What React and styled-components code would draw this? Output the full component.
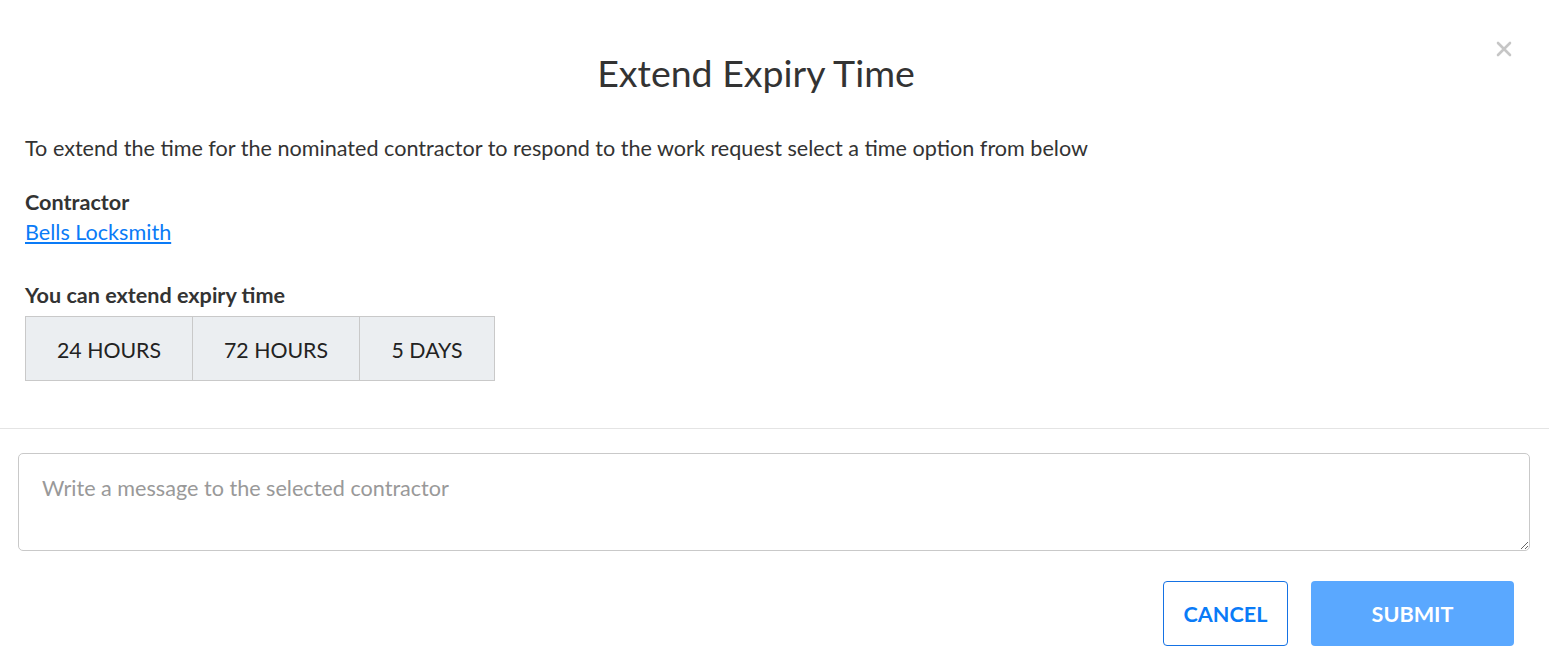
import styled, { createGlobalStyle } from "styled-components";

const GlobalStyle = createGlobalStyle`
  html, body {
    margin: 0;
    padding: 0;
    background: #fff;
  }
  body {
    font-family: Lato, "Liberation Sans", sans-serif;
    color: #333;
  }
  * {
    box-sizing: border-box;
  }
`;

const options = ["24 HOURS", "72 HOURS", "5 DAYS"];

const App = () => {
    return (
        <>
            <GlobalStyle />
            <Modal>
                <CloseButton aria-label="close">
                    <svg width="16" height="16" viewBox="0 0 16 16">
                        <path d="M2 2 L14 14 M14 2 L2 14" stroke="#c6c6c6" strokeWidth="2.6" strokeLinecap="round" />
                    </svg>
                </CloseButton>
                <Title>Extend Expiry Time</Title>
                <Body>
                    <Intro>To extend the time for the nominated contractor to respond to the work request select a time option from below</Intro>
                    <Label>Contractor</Label>
                    <ContractorLink href="#">Bells Locksmith</ContractorLink>
                    <Label spaced>You can extend expiry time</Label>
                    <OptionGroup>
                        {options.map((o, i) => (
                            <OptionButton key={o} wide={i < 2}>{o}</OptionButton>
                        ))}
                    </OptionGroup>
                </Body>
                <Divider />
                <Footer>
                    <Message placeholder="Write a message to the selected contractor" />
                    <Actions>
                        <CancelButton>CANCEL</CancelButton>
                        <SubmitButton>SUBMIT</SubmitButton>
                    </Actions>
                </Footer>
            </Modal>
        </>
    );
};

export default App;

const Modal = styled.div`
position: relative;
width: 100%;
padding-top: 51px;
`

const CloseButton = styled.button`
position: absolute;
top: 41px;
right: 37px;
width: 16px;
height: 16px;
padding: 0;
border: none;
background: none;
display: flex;
cursor: pointer;
`

const Title = styled.h1`
margin: 0;
padding-right: 37px;
text-align: center;
font-size: 37.5px;
font-weight: 400;
line-height: 43px;
color: #333;
`

const Body = styled.div`
padding: 39px 25px 0 25px;
display: flex;
flex-direction: column;
align-items: flex-start;
`

const Intro = styled.p`
margin: 0 0 24px 0;
font-size: 21.6px;
line-height: 30px;
color: #333;
`

const Label = styled.div`
font-size: 21.6px;
font-weight: 700;
line-height: 30px;
color: #333;
margin-top: ${p => (p.spaced ? "33px" : "0")};
margin-bottom: ${p => (p.spaced ? "6px" : "0")};
`

const ContractorLink = styled.a`
font-size: 21.6px;
line-height: 30px;
color: #0a7bf7;
text-decoration: underline;
`

const OptionGroup = styled.div`
display: flex;
border: 1px solid #c9c9c9;
`

const OptionButton = styled.button`
height: 63px;
width: ${p => (p.wide ? "167px" : "135px")};
font-family: Lato, "Liberation Sans", sans-serif;
font-size: 21.3px;
color: #222;
background: #ebeef1;
border: none;
border-left: 1px solid #c9c9c9;
padding: 2px 0 0 0;
&:first-child {
    border-left: none;
    width: 166px;
}
`

const Divider = styled.hr`
margin: 47px 0 0 0;
border: none;
border-top: 1px solid #e4e4e4;
`

const Footer = styled.div`
padding: 24px 19px 21px 18px;
`

const Message = styled.textarea`
display: block;
width: 100%;
height: 98px;
padding: 19px 23px;
font-family: Lato, "Liberation Sans", sans-serif;
font-size: 21.6px;
line-height: 30px;
color: #333;
border: 1px solid #c9c9c9;
border-radius: 5px;
&::placeholder {
    color: #999;
}
`

const Actions = styled.div`
display: flex;
justify-content: flex-end;
gap: 23px;
margin-top: 30px;
padding-right: 16px;
`

const CancelButton = styled.button`
width: 125px;
height: 65px;
font-family: Lato, "Liberation Sans", sans-serif;
font-size: 21.6px;
font-weight: 700;
color: #0a7bf7;
background: #fff;
border: 1px solid #1572e4;
border-radius: 4px;
`

const SubmitButton = styled.button`
width: 203px;
height: 65px;
font-family: Lato, "Liberation Sans", sans-serif;
font-size: 21.6px;
font-weight: 700;
color: #fff;
background: #5aa8ff;
border: none;
border-radius: 4px;
`
